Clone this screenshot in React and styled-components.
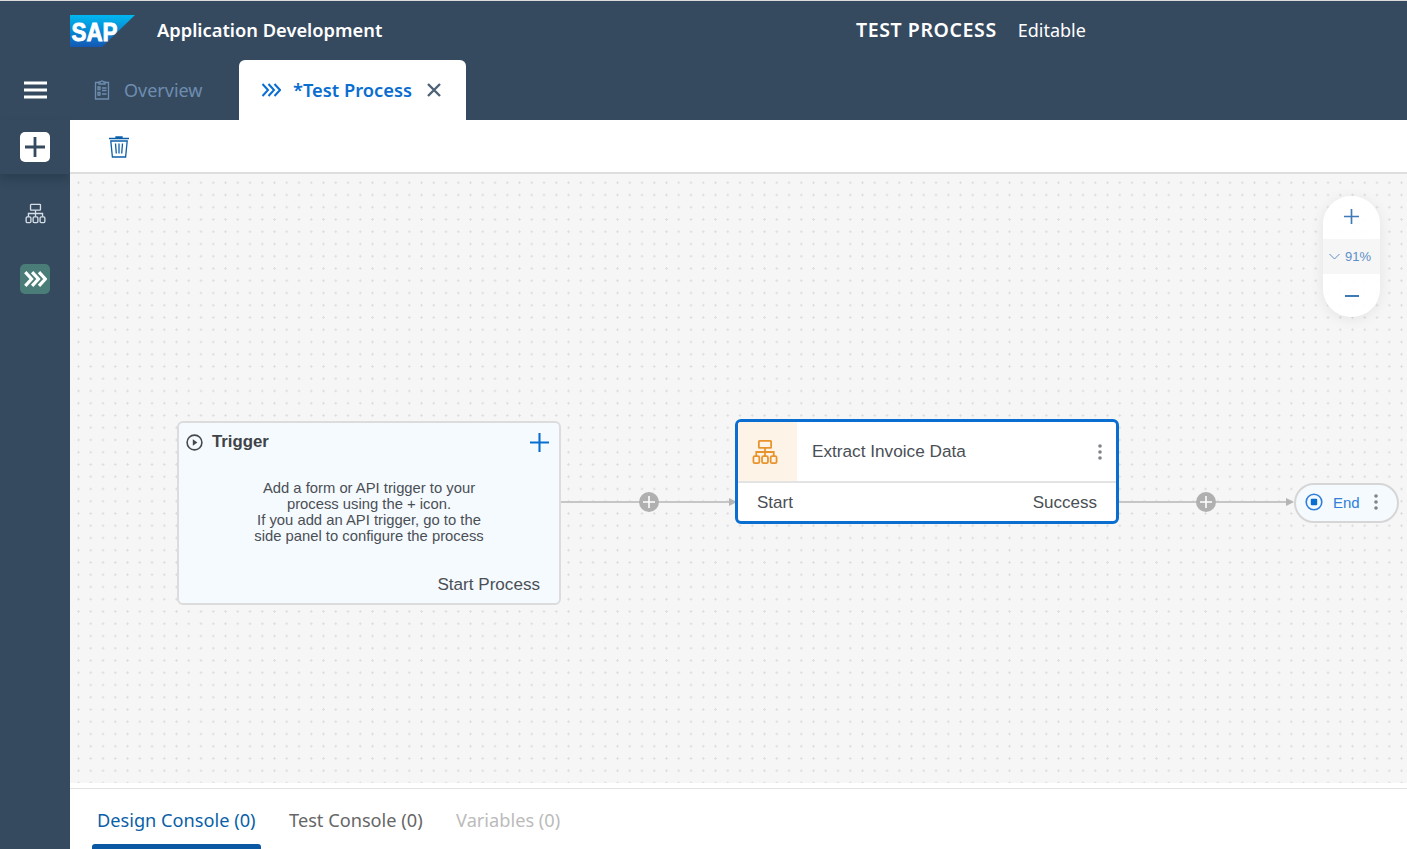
import React from 'react';
import styled, { createGlobalStyle } from 'styled-components';

const GlobalStyle = createGlobalStyle`
    html, body {
        margin: 0;
        padding: 0;
        height: 100%;
        overflow: hidden;
        background: #ffffff;
    }
    * { box-sizing: border-box; }
`;

const UI = '"Noto Sans", "Open Sans", sans-serif';
const NODE = '"Liberation Sans", Arial, sans-serif';

const Page = styled.div`
    display: flex;
    flex-direction: column;
    width: 100vw;
    height: 100vh;
    font-family: ${UI};
`;

const TopBar = styled.header`
    background: #354a5f;
    border-top: 1px solid #dcdcdc;
    flex: none;
`;

const BrandRow = styled.div`
    display: flex;
    align-items: center;
    height: 59px;
    padding: 0 0 2px 70px;
`;

const Logo = styled.svg`
    width: 65px;
    height: 32px;
    margin-top: 3px;
    flex: none;
`;

const AppName = styled.div`
    margin-left: 22px;
    width: 699px;
    color: #ffffff;
    font-size: 18.3px;
    font-weight: 600;
    flex: none;
`;

const ProcessName = styled.div`
    color: #ffffff;
    font-size: 19.5px;
    font-weight: 600;
    letter-spacing: 0.6px;
`;

const ProcessState = styled.div`
    margin-left: 21px;
    color: #ffffff;
    font-size: 18px;
`;

const TabRow = styled.div`
    display: flex;
    height: 60px;
`;

const MenuCell = styled.div`
    width: 70px;
    display: flex;
    align-items: center;
    justify-content: center;
    padding-left: 1px;
    flex: none;
`;

const OverviewTab = styled.div`
    width: 169px;
    display: flex;
    align-items: center;
    padding: 0 0 1px 24px;
    gap: 14px;
    color: #6f8db0;
    font-size: 18px;
`;

const ActiveTab = styled.div`
    width: 227px;
    display: flex;
    align-items: center;
    padding: 0 0 1px 22px;
    background: #ffffff;
    border-radius: 6px 6px 0 0;
    color: #0a6ed1;
    font-size: 18.3px;
    font-weight: 600;
`;

const TabTitle = styled.span`
    margin-left: 12px;
    width: 134px;
`;

const Body = styled.div`
    display: flex;
    flex: 1;
    min-height: 0;
`;

const Sidebar = styled.nav`
    width: 70px;
    background: #354a5f;
    flex: none;
    display: flex;
    flex-direction: column;
    align-items: center;
`;

const AddCell = styled.div`
    width: 100%;
    height: 54px;
    display: flex;
    justify-content: center;
    padding-top: 12px;
    box-shadow: 0 6px 8px rgba(30, 45, 60, 0.35);
`;

const SideButton = styled.div`
    width: 30px;
    height: 30px;
    border-radius: 5px;
    background: ${p => p.$bg};
    display: flex;
    align-items: center;
    justify-content: center;
`;

const SideIcon = styled.div`
    margin-top: 29px;
    height: 22px;
    display: flex;
`;

const SideActive = styled.div`
    margin-top: 39px;
`;

const Main = styled.main`
    flex: 1;
    min-width: 0;
    display: flex;
    flex-direction: column;
`;

const Toolbar = styled.div`
    height: 54px;
    flex: none;
    display: flex;
    align-items: center;
    padding: 0 0 0 38px;
    background: #ffffff;
    border-bottom: 2px solid #dedede;
`;

const Canvas = styled.div`
    position: relative;
    flex: 1;
    overflow: hidden;
    background-color: #f6f6f6;
    background-image: radial-gradient(circle, #dedede 1px, transparent 1.3px);
    background-size: 12.25px 12.25px;
    background-position: 2.4px 2.6px;
`;

const TriggerCard = styled.section`
    position: absolute;
    left: 107px;
    top: 247px;
    width: 384px;
    height: 184px;
    background: #f5faff;
    border: 2px solid #dcdcdc;
    border-radius: 6px;
    font-family: ${NODE};
    color: #4a4f55;
    display: flex;
    flex-direction: column;
`;

const TriggerHead = styled.div`
    display: flex;
    align-items: center;
    height: 38px;
    padding: 0 10px 0 7px;
`;

const TriggerTitle = styled.div`
    margin-left: 9px;
    font-size: 16.8px;
    font-weight: 700;
    color: #3f4347;
    flex: 1;
`;

const TriggerText = styled.p`
    margin: 19px 0 0;
    text-align: center;
    font-size: 14.8px;
    line-height: 16px;
`;

const TriggerFoot = styled.div`
    margin-top: auto;
    padding: 0 19px 8px 0;
    text-align: right;
    font-size: 17.1px;
`;

const TaskCard = styled.section`
    position: absolute;
    left: 665px;
    top: 245px;
    width: 384px;
    height: 105px;
    background: #ffffff;
    border: 3px solid #0a6ed1;
    border-radius: 6px;
    font-family: ${NODE};
    color: #4a4f55;
    overflow: hidden;
`;

const TaskHead = styled.div`
    display: flex;
    align-items: center;
    height: 61px;
    border-bottom: 2px solid #e3e3e3;
`;

const TaskIconCell = styled.div`
    width: 59px;
    height: 100%;
    background: #fdf3e7;
    display: flex;
    align-items: center;
    justify-content: center;
    padding-right: 5px;
    flex: none;
`;

const TaskTitle = styled.div`
    margin-left: 15px;
    flex: 1;
    font-size: 17.2px;
`;

const TaskMenu = styled.div`
    display: flex;
    padding-right: 14px;
`;

const TaskFoot = styled.div`
    display: flex;
    justify-content: space-between;
    padding: 10px 19px 0 19px;
    font-size: 17px;
`;

const Connector = styled.div`
    position: absolute;
    left: ${p => p.$left}px;
    top: 318px;
    width: ${p => p.$width}px;
    height: 20px;
    padding-right: ${p => p.$inset || 0}px;
    display: flex;
    align-items: center;
    justify-content: center;
    &::before {
        content: '';
        position: absolute;
        left: 0;
        right: 4px;
        top: 9px;
        height: 2px;
        background: #c6c6c6;
    }
    &::after {
        content: '';
        position: absolute;
        right: 0;
        top: 6px;
        border-left: 8px solid #b5b5b5;
        border-top: 4px solid transparent;
        border-bottom: 4px solid transparent;
    }
`;

const ConnectorPlus = styled.div`
    position: relative;
    z-index: 1;
    width: 20px;
    height: 20px;
    border-radius: 50%;
    background: #b0b0b0;
    display: flex;
    align-items: center;
    justify-content: center;
`;

const EndPill = styled.div`
    position: absolute;
    left: 1224px;
    top: 309px;
    width: 105px;
    height: 40px;
    border: 2px solid #d6d6d6;
    border-radius: 20px;
    background: #f5faff;
    display: flex;
    align-items: center;
    padding: 0 0 2px 9px;
    font-family: ${NODE};
    font-size: 15px;
    color: #2f7ed8;
`;

const EndLabel = styled.span`
    margin-left: 10px;
    margin-right: 14px;
`;

const ZoomControl = styled.div`
    position: absolute;
    left: 1253px;
    top: 22px;
    width: 57px;
    height: 121px;
    border-radius: 28px;
    background: rgba(255, 255, 255, 0.93);
    box-shadow: 0 2px 14px rgba(0, 0, 0, 0.08);
    display: flex;
    flex-direction: column;
`;

const ZoomButton = styled.div`
    flex: 0 0 43px;
    display: flex;
    align-items: center;
    justify-content: center;
    padding-bottom: ${p => p.$lift || 0}px;
`;

const ZoomLevel = styled.div`
    height: 35px;
    background: rgba(245, 245, 245, 0.9);
    display: flex;
    align-items: center;
    padding-left: 6px;
    gap: 5px;
    font-family: ${NODE};
    font-size: 13px;
    color: #5b8fc7;
`;

const ConsoleBar = styled.div`
    height: 66px;
    flex: none;
    background: #ffffff;
    padding-top: 5px;
`;

const ConsoleTabs = styled.div`
    display: flex;
    height: 61px;
    padding-left: 22px;
    border-top: 1px solid #e2e2e2;
`;

const ConsoleTab = styled.div`
    position: relative;
    padding: 19px 5px 0;
    margin-right: 23.5px;
    font-size: 18.2px;
    color: ${p => p.$color};
    ${p => p.$active && `
        &::after {
            content: '';
            position: absolute;
            left: 0;
            right: 0;
            bottom: 0;
            height: 5px;
            border-radius: 3px 3px 0 0;
            background: #0a57a4;
        }
    `}
`;

const NetworkIcon = ({ color, size = 22, sw = 1.4 }) => (
    <svg width={size} height={size} viewBox="0 0 22 22" fill="none" stroke={color} strokeWidth={sw}>
        <rect x="5.8" y="1.5" width="10.4" height="6" rx="0.6" />
        <path d="M11 7.5V11M3.6 14.5V11H18.4V14.5M11 11V14.5" />
        <rect x="1.2" y="14.5" width="5" height="6" rx="1.2" />
        <rect x="8.5" y="14.5" width="5" height="6" rx="1.2" />
        <rect x="15.8" y="14.5" width="5" height="6" rx="1.2" />
    </svg>
);

const Chevrons = ({ color, width = 20, height = 14, sw = 2 }) => (
    <svg width={width} height={height} viewBox="0 0 20 14" fill="none" stroke={color} strokeWidth={sw}>
        <path d="M1.5 1L7 7L1.5 13M7.5 1L13 7L7.5 13M13.5 1L19 7L13.5 13" />
    </svg>
);

const Plus = ({ color, size = 20, sw = 2 }) => (
    <svg width={size} height={size} viewBox="0 0 20 20" stroke={color} strokeWidth={sw}>
        <path d="M10 0V20M0 10H20" />
    </svg>
);

const Kebab = ({ color }) => (
    <svg width="4" height="16" viewBox="0 0 4 16" fill={color}>
        <circle cx="2" cy="2" r="1.8" />
        <circle cx="2" cy="8" r="1.8" />
        <circle cx="2" cy="14" r="1.8" />
    </svg>
);

const App = () => {
    return (
        <Page>
            <GlobalStyle />
            <TopBar>
                <BrandRow>
                    <Logo viewBox="0 0 65 32">
                        <defs>
                            <linearGradient id="sapBlue" x1="0" y1="0" x2="0" y2="1">
                                <stop offset="0" stopColor="#00b8f1" />
                                <stop offset="1" stopColor="#1358b5" />
                            </linearGradient>
                        </defs>
                        <polygon points="0,0 65,0 32,32 0,32" fill="url(#sapBlue)" />
                        <text x="1.5" y="25.5" fill="#ffffff" stroke="#ffffff" strokeWidth="0.9" fontFamily="Liberation Sans" fontWeight="700" fontSize="25" textLength="46" lengthAdjust="spacingAndGlyphs">SAP</text>
                    </Logo>
                    <AppName>Application Development</AppName>
                    <ProcessName>TEST PROCESS</ProcessName>
                    <ProcessState>Editable</ProcessState>
                </BrandRow>
                <TabRow>
                    <MenuCell>
                        <svg width="24" height="18" viewBox="0 0 24 18" fill="#ffffff">
                            <rect y="0.5" width="23" height="3" />
                            <rect y="7.5" width="23" height="3" />
                            <rect y="14.5" width="23" height="3" />
                        </svg>
                    </MenuCell>
                    <OverviewTab>
                        <svg width="16" height="20" viewBox="0 0 16 20" fill="none" stroke="#6f8db0" strokeWidth="1.3">
                            <path d="M5 2.5H1.5V19H14.5V2.5H11" />
                            <path d="M5 4V2H6.5C6.8 0.6 9.2 0.6 9.5 2H11V4Z" />
                            <path d="M4 7H6V9.5H4ZM4 12.5H6V15H4ZM8 8H12.5M8 10.5H12.5M8 14H12.5" />
                        </svg>
                        Overview
                    </OverviewTab>
                    <ActiveTab>
                        <Chevrons color="#0a6ed1" />
                        <TabTitle>*Test Process</TabTitle>
                        <svg width="14" height="14" viewBox="0 0 14 14" stroke="#4d6277" strokeWidth="2.4">
                            <path d="M1 1L13 13M13 1L1 13" />
                        </svg>
                    </ActiveTab>
                </TabRow>
            </TopBar>
            <Body>
                <Sidebar>
                    <AddCell>
                        <SideButton $bg="#ffffff">
                            <Plus color="#354a5f" size={20} sw={2.8} />
                        </SideButton>
                    </AddCell>
                    <SideIcon>
                        <NetworkIcon color="#d5dde6" size={21} />
                    </SideIcon>
                    <SideActive>
                        <SideButton $bg="#4a7d78">
                            <Chevrons color="#ffffff" width={24} height={16} sw={2.8} />
                        </SideButton>
                    </SideActive>
                </Sidebar>
                <Main>
                    <Toolbar>
                        <svg width="22" height="23" viewBox="0 0 22 23" fill="none" stroke="#0a5fa8" strokeWidth="1.3">
                            <path d="M1 3.5H21M8 3.5V2H14V3.5" />
                            <path d="M2.8 6H19.2L17.6 22H4.4Z" />
                            <path d="M7.5 8.5L8.3 18.5M11 8.5V18.5M14.5 8.5L13.7 18.5" />
                        </svg>
                    </Toolbar>
                    <Canvas>
                        <TriggerCard>
                            <TriggerHead>
                                <svg width="17" height="17" viewBox="0 0 17 17" fill="none" stroke="#45494e" strokeWidth="1.6">
                                    <circle cx="8.5" cy="8.5" r="7.4" />
                                    <path d="M6.8 5.3L11.4 8.5L6.8 11.7Z" fill="#45494e" stroke="none" />
                                </svg>
                                <TriggerTitle>Trigger</TriggerTitle>
                                <Plus color="#0a6ed1" size={19} sw={2.2} />
                            </TriggerHead>
                            <TriggerText>
                                Add a form or API trigger to your<br />
                                process using the + icon.<br />
                                If you add an API trigger, go to the<br />
                                side panel to configure the process
                            </TriggerText>
                            <TriggerFoot>Start Process</TriggerFoot>
                        </TriggerCard>

                        <Connector $left={491} $width={176}>
                            <ConnectorPlus><Plus color="#ffffff" size={12} sw={2.6} /></ConnectorPlus>
                        </Connector>

                        <TaskCard>
                            <TaskHead>
                                <TaskIconCell>
                                    <NetworkIcon color="#e8932c" size={26} sw={1.5} />
                                </TaskIconCell>
                                <TaskTitle>Extract Invoice Data</TaskTitle>
                                <TaskMenu><Kebab color="#7d8388" /></TaskMenu>
                            </TaskHead>
                            <TaskFoot>
                                <span>Start</span>
                                <span>Success</span>
                            </TaskFoot>
                        </TaskCard>

                        <Connector $left={1049} $width={175} $inset={2}>
                            <ConnectorPlus><Plus color="#ffffff" size={12} sw={2.6} /></ConnectorPlus>
                        </Connector>

                        <EndPill>
                            <svg width="18" height="18" viewBox="0 0 18 18" fill="none" stroke="#2f7ed8" strokeWidth="1.6">
                                <circle cx="9" cy="9" r="7.8" />
                                <rect x="5.8" y="5.8" width="6.4" height="6.4" rx="1" fill="#0a6ed1" stroke="none" />
                            </svg>
                            <EndLabel>End</EndLabel>
                            <Kebab color="#7d8388" />
                        </EndPill>

                        <ZoomControl>
                            <ZoomButton $lift={2}><Plus color="#3f7ab8" size={15} sw={2.2} /></ZoomButton>
                            <ZoomLevel>
                                <svg width="11" height="7" viewBox="0 0 11 7" fill="none" stroke="#5b8fc7" strokeWidth="1">
                                    <path d="M0.5 1L5.5 6L10.5 1" />
                                </svg>
                                91%
                            </ZoomLevel>
                            <ZoomButton>
                                <svg width="14" height="2" viewBox="0 0 14 2" fill="#3f7ab8"><rect width="14" height="2" /></svg>
                            </ZoomButton>
                        </ZoomControl>
                    </Canvas>
                    <ConsoleBar>
                        <ConsoleTabs>
                            <ConsoleTab $active $color="#0a5fa8">Design Console (0)</ConsoleTab>
                            <ConsoleTab $color="#666666">Test Console (0)</ConsoleTab>
                            <ConsoleTab $color="#bbbbbb">Variables (0)</ConsoleTab>
                        </ConsoleTabs>
                    </ConsoleBar>
                </Main>
            </Body>
        </Page>
    );
};

export default App;
